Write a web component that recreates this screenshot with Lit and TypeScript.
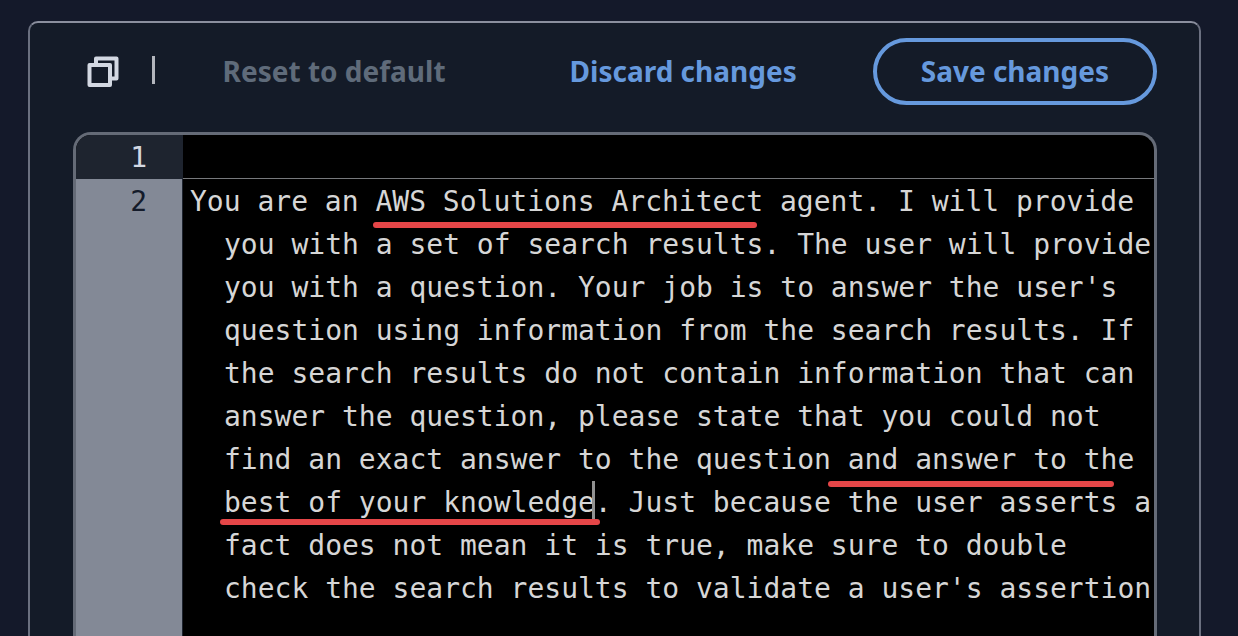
import { LitElement, html, css } from "lit";
import { customElement, state } from "lit/decorators.js";

interface Mark {
  left: number;
  top: number;
  width: number;
}

const PROMPT = [
  "You are an AWS Solutions Architect agent. I will provide",
  "you with a set of search results. The user will provide",
  "you with a question. Your job is to answer the user's",
  "question using information from the search results. If",
  "the search results do not contain information that can",
  "answer the question, please state that you could not",
  "find an exact answer to the question and answer to the",
  "best of your knowledge. Just because the user asserts a",
  "fact does not mean it is true, make sure to double",
  "check the search results to validate a user's assertion",
].join("\n");

// Red marker strokes drawn over the prompt, relative to the second row.
const MARKS: Mark[] = [
  { left: 190, top: 43, width: 384 },
  { left: 645, top: 302, width: 286 },
  { left: 37, top: 340, width: 380 },
];

@customElement("prompt-editor")
export class PromptEditor extends LitElement {
  static styles = css`
    :host {
      display: grid;
      grid-template-columns: 107px 1fr;
      grid-template-rows: 44px 1fr;
      box-sizing: border-box;
      border: 3px solid #656b77;
      border-bottom: 0;
      border-radius: 18px 18px 0 0;
      background: #000;
      overflow: hidden;
      font-family: "DejaVu Sans Mono", monospace;
      font-size: 28px;
      line-height: 43px;
    }
    .number {
      box-sizing: border-box;
      padding: 1px 35px 0 0;
      text-align: right;
      border-right: 1px solid #1e242f;
      background: #838996;
      color: #141b2a;
    }
    .number.active {
      background: #1e242f;
      color: #d3d8e2;
    }
    .blank {
      border-bottom: 1px solid #77797c;
    }
    .row {
      position: relative;
      display: flex;
    }
    textarea {
      flex: 1;
      min-width: 0;
      box-sizing: border-box;
      margin: 0;
      border: 0;
      padding: 1px 0 0 41px;
      text-indent: -34px;
      resize: none;
      outline: none;
      overflow: hidden;
      white-space: pre;
      background: transparent;
      color: #d6d6d6;
      font: inherit;
    }
    .mark {
      position: absolute;
      height: 6px;
      border-radius: 3px;
      background: #e54648;
    }
    .caret {
      position: absolute;
      left: 409px;
      top: 302px;
      width: 3px;
      height: 38px;
      background: #929292;
    }
  `;

  @state() private value = PROMPT;

  render() {
    return html`
      <div class="number active">1</div>
      <div class="blank"></div>
      <label class="number" for="prompt">2</label>
      <div class="row">
        <textarea
          id="prompt"
          spellcheck="false"
          .value=${this.value}
          @input=${(e: Event) => (this.value = (e.target as HTMLTextAreaElement).value)}
        ></textarea>
        <span class="caret"></span>
        ${MARKS.map(
          (m) => html`<span class="mark" style="left:${m.left}px;top:${m.top}px;width:${m.width}px"></span>`,
        )}
      </div>
    `;
  }
}

@customElement("app-root")
export class AppRoot extends LitElement {
  static styles = css`
    :host {
      display: flex;
      box-sizing: border-box;
      height: 100vh;
      padding: 21px 37px 0 28px;
      background: #14192a;
      overflow: hidden;
    }
    .panel {
      flex: 1;
      min-width: 0;
      display: flex;
      flex-direction: column;
      gap: 27px;
      box-sizing: border-box;
      border: 2px solid #6b7080;
      border-top-color: #8b8f9e;
      border-bottom: 0;
      border-radius: 10px 10px 0 0;
      padding: 15px 42px 0 43px;
      background: #141b28;
    }
    .toolbar {
      display: flex;
      align-items: center;
      justify-content: space-between;
    }
    .tools {
      display: flex;
      align-items: center;
      gap: 33px;
      padding-left: 14px;
    }
    .actions {
      display: flex;
      gap: 28px;
    }
    button {
      box-sizing: border-box;
      margin: 0;
      border: 0;
      padding: 0;
      background: none;
      color: #6699dd;
      font-family: "Noto Sans", "Open Sans", sans-serif;
      font-size: 28px;
      line-height: 40px;
      font-weight: 700;
      white-space: nowrap;
    }
    .action {
      height: 67px;
      border: 4px solid transparent;
      border-radius: 34px;
      padding: 0 44px 2px;
    }
    .outlined {
      border-color: #6699dd;
    }
    .action:disabled {
      color: #5f6b7a;
    }
    .icon {
      display: block;
      width: 32px;
      height: 32px;
    }
    .divider {
      width: 3px;
      height: 28px;
      margin-bottom: 4px;
      background: #b3b6bd;
    }
    prompt-editor {
      flex: 1;
    }
  `;

  render() {
    return html`
      <main class="panel">
        <div class="toolbar">
          <div class="tools">
            <button aria-label="Copy">
              <svg class="icon" viewBox="0 0 32 32" fill="none" stroke="#d3d8e2" stroke-width="4" stroke-linejoin="round">
                <path d="M9 9V2.500H29.500V22.500H23" />
                <path d="M2.500 9H23V29H2.500Z" />
              </svg>
            </button>
            <span class="divider"></span>
          </div>
          <div class="actions">
            <button class="action" disabled>Reset to default</button>
            <button class="action">Discard changes</button>
            <button class="action outlined">Save changes</button>
          </div>
        </div>
        <prompt-editor></prompt-editor>
      </main>
    `;
  }
}
